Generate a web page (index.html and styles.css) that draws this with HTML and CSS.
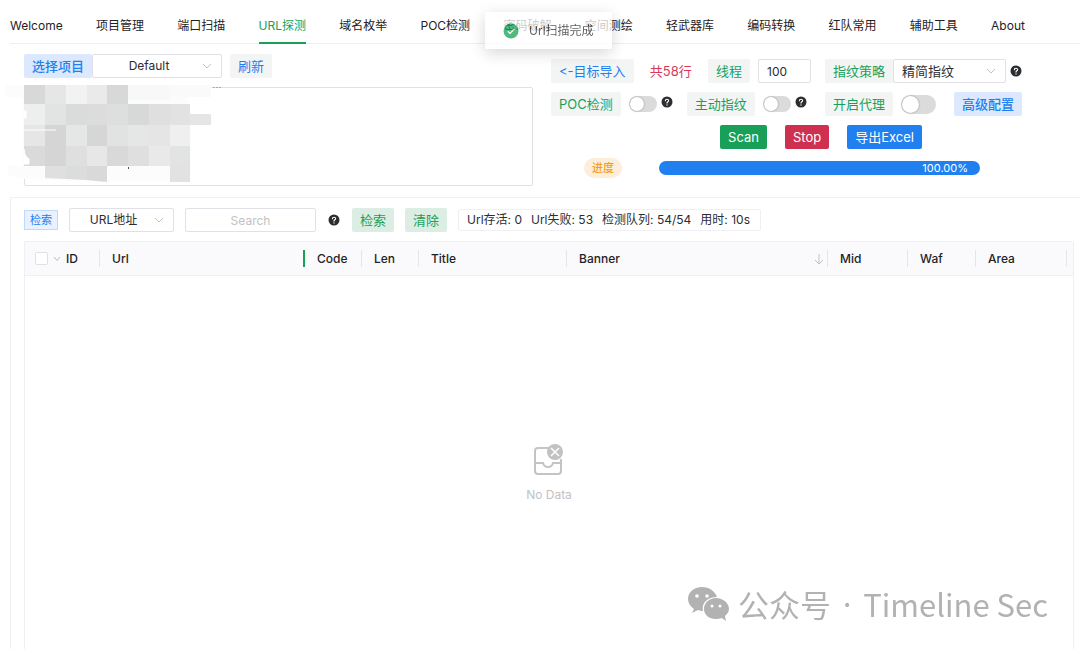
FILE: index.html
```html
<!DOCTYPE html>
<html lang="zh-CN">
<head>
  <meta charset="UTF-8">
  <meta name="viewport" content="width=device-width, initial-scale=1.0">
  <title>URL探测</title>
  <link rel="stylesheet" href="styles.css">
</head>
<body>
  <svg class="sprite" aria-hidden="true">
    <symbol id="icon-help" viewBox="0 0 12 12">
      <circle cx="6" cy="6" r="5.5" fill="#2b2d30"/>
      <path d="M4.4 4.8C4.4 2.7 7.7 2.8 7.6 4.7C7.6 5.8 6 5.8 6 7.1" fill="none" stroke="#fff" stroke-width="1.1" stroke-linecap="round"/>
      <circle cx="6" cy="8.9" r=".7" fill="#fff"/>
    </symbol>
  </svg>

  <div class="app">
    <nav class="tabs">
      <a href="#">Welcome</a>
      <a href="#">项目管理</a>
      <a href="#">端口扫描</a>
      <a href="#" class="active">URL探测</a>
      <a href="#">域名枚举</a>
      <a href="#">POC检测</a>
      <a href="#">密码破解</a>
      <a href="#">空间测绘</a>
      <a href="#">轻武器库</a>
      <a href="#">编码转换</a>
      <a href="#">红队常用</a>
      <a href="#">辅助工具</a>
      <a href="#">About</a>
    </nav>

    <section class="panel">
      <div class="targets">
        <div class="project">
          <label class="label label-blue" for="project">选择项目</label>
          <select class="select select-project" id="project"><option>Default</option></select>
          <button class="btn btn-light text-blue">刷新</button>
        </div>
        <div class="target-box">
          <textarea aria-label="目标"></textarea>
          <svg class="mosaic" width="220" height="100" viewBox="0 0 220 100" aria-hidden="true">
            <path d="M2 1H207V13H184V28H187V98H104L20 95L4 91V82H19V14L2 13Z" fill="#fcfcfc"/>
            <g shape-rendering="crispEdges">
              <path d="M20 1h21v19H20z" fill="#d8d8d8"/>
              <path d="M41 1h21v19H41z" fill="#e6e6e6"/>
              <path d="M62 1h21v19H62z" fill="#f2f2f2"/>
              <path d="M83 1h20v19H83z" fill="#eaeaea"/>
              <path d="M103 1h21v19h-21z" fill="#d8d8d8"/>
              <path d="M124 1h42v15h-42z" fill="#f8f8f8"/>
              <path d="M166 1h41v12h-41z" fill="#fafafa"/>
              <path d="M20 20h21v21H20z" fill="#ecefee"/>
              <path d="M41 20h21v21H41z" fill="#e1e4e3"/>
              <path d="M62 20h21v21H62z" fill="#d9dcdb"/>
              <path d="M83 20h20v21H83z" fill="#dcdcdc"/>
              <path d="M103 20h21v21h-21z" fill="#dddfde"/>
              <path d="M124 20h21v21h-21z" fill="#d6d9d8"/>
              <path d="M145 20h21v21h-21z" fill="#dfdfdf"/>
              <path d="M166 20h20v21h-20z" fill="#e2e2e2"/>
              <path d="M186 30h21v11h-21z" fill="#e5e5e5"/>
              <path d="M20 41h21v21H20z" fill="#e6e6e6"/>
              <path d="M41 41h21v21H41z" fill="#d5d5d5"/>
              <path d="M62 41h21v21H62z" fill="#e4e7e6"/>
              <path d="M83 41h20v21H83z" fill="#d6d6d6"/>
              <path d="M103 41h21v21h-21z" fill="#e0e3e2"/>
              <path d="M124 41h21v21h-21z" fill="#e4e7e6"/>
              <path d="M145 41h21v21h-21z" fill="#e5e5e5"/>
              <path d="M166 41h20v21h-20z" fill="#efefef"/>
              <path d="M20 62h21v20H20z" fill="#dadada"/>
              <path d="M41 62h21v20H41z" fill="#d5d5d5"/>
              <path d="M62 62h21v20H62z" fill="#dfdfdf"/>
              <path d="M83 62h20v20H83z" fill="#e7e7e7"/>
              <path d="M103 62h21v20h-21z" fill="#d9d9d9"/>
              <path d="M124 62h21v20h-21z" fill="#dfdfdf"/>
              <path d="M145 62h21v20h-21z" fill="#e9e9e9"/>
              <path d="M166 62h20v20h-20z" fill="#e1e4e3"/>
              <path d="M166 82h20v16h-20z" fill="#e2e2e2"/>
            </g>
            <path d="M41 82H62V95L41 94Z" fill="#dfdfdf"/>
            <path d="M62 82H83V96L62 95Z" fill="#dadddc"/>
            <path d="M83 82H103V98L92 97L83 96Z" fill="#d9d9d9"/>
            <path d="M20 46H52M20 27h2v7h-2zM20 65q0 7 5 10v5h-5z" fill="#fff" stroke="#fff"/>
            <path d="M209 3.500h8" stroke="#aaa" stroke-dasharray="2 1"/>
            <path d="M124 83h1v2h-1z" fill="#555"/>
          </svg>
        </div>
      </div>

      <div class="settings">
        <div class="setting-row">
          <div class="setting-main">
            <button class="btn btn-light text-blue">&lt;-目标导入</button>
            <span class="text-red">共58行</span>
            <div class="pair">
              <label class="label label-light" for="threads">线程</label>
              <input class="input input-threads" id="threads" type="text" value="100">
            </div>
          </div>
          <div class="joined">
            <label class="label label-light" for="strategy">指纹策略</label>
            <select class="select select-strategy" id="strategy"><option>精简指纹</option></select>
            <svg class="help"><use href="#icon-help"/></svg>
          </div>
        </div>
        <div class="setting-row">
          <div class="setting-main setting-switches">
            <div class="pair">
              <label class="label label-light" for="poc">POC检测</label>
              <input class="switch" id="poc" type="checkbox">
              <svg class="help help-top"><use href="#icon-help"/></svg>
            </div>
            <div class="pair">
              <label class="label label-light" for="active-scan">主动指纹</label>
              <input class="switch" id="active-scan" type="checkbox">
              <svg class="help help-top"><use href="#icon-help"/></svg>
            </div>
          </div>
          <div class="pair">
            <label class="label label-light" for="proxy">开启代理</label>
            <input class="switch switch-large" id="proxy" type="checkbox">
            <button class="btn btn-blue-light">高级配置</button>
          </div>
        </div>
        <div class="actions">
          <button class="btn btn-green">Scan</button>
          <button class="btn btn-red">Stop</button>
          <button class="btn btn-blue">导出Excel</button>
        </div>
        <div class="progress-row">
          <span class="progress-tag">进度</span>
          <div class="progress" role="progressbar" aria-label="进度" aria-valuenow="100">100.00%</div>
        </div>
      </div>
    </section>

    <section class="results">
      <div class="toolbar">
        <label class="tag" for="field">检索</label>
        <select class="select select-field" id="field"><option>URL地址</option></select>
        <input class="input input-search" type="text" placeholder="Search" aria-label="Search">
        <svg class="help help-search"><use href="#icon-help"/></svg>
        <button class="btn btn-green-light">检索</button>
        <button class="btn btn-green-light">清除</button>
        <div class="stats">
          <span>Url存活: 0</span>
          <span>Url失败: 53</span>
          <span>检测队列: 54/54</span>
          <span>用时: 10s</span>
        </div>
      </div>

      <div class="table-box">
        <table>
          <colgroup>
            <col class="col-id">
            <col class="col-url">
            <col class="col-code">
            <col class="col-code">
            <col class="col-title">
            <col>
            <col class="col-mid">
            <col class="col-waf">
            <col class="col-area">
          </colgroup>
          <thead>
            <tr>
              <th>
                <div class="th-id">
                  <input class="checkbox" type="checkbox" aria-label="全选">
                  <svg width="8" height="6" viewBox="0 0 8 6"><path d="M1 1L4 4.500L7 1" fill="none" stroke="#bbb"/></svg>
                  <span>ID</span>
                </div>
              </th>
              <th class="resizing"><div>Url</div></th>
              <th><div>Code</div></th>
              <th><div>Len</div></th>
              <th><div>Title</div></th>
              <th>
                <div class="th-sort">Banner
                  <svg width="10" height="12" viewBox="0 0 10 12"><path d="M5 1V11M1 7L5 11L9 7" fill="none" stroke="#c2c2c2"/></svg>
                </div>
              </th>
              <th><div>Mid</div></th>
              <th><div>Waf</div></th>
              <th><div>Area</div></th>
            </tr>
          </thead>
        </table>
        <div class="empty">
          <svg width="32" height="34" viewBox="0 0 32 34">
            <path d="M18 5H5Q2 5 2 8V28Q2 31 5 31H25Q28 31 28 28V16M2 20H10Q11 24 15 24Q19 24 20 20H28" fill="none" stroke="#c4c4c4" stroke-width="2"/>
            <circle cx="22" cy="9" r="8" fill="#c2c2c2"/>
            <path d="M18 5L26 13M26 5L18 13" stroke="#fff" stroke-width="1.500"/>
          </svg>
          <span>No Data</span>
        </div>
      </div>
    </section>
  </div>

  <div class="toast" role="status">
    <svg width="16" height="16" viewBox="0 0 16 16">
      <circle cx="8" cy="8" r="7.500" fill="#18a058"/>
      <path d="M4.800 8.200L7 10.400L11.300 6" fill="none" stroke="#fff" stroke-width="1.300"/>
    </svg>
    <span>Url扫描完成</span>
  </div>

  <div class="watermark">
    <svg width="42" height="36" viewBox="0 0 42 36">
      <path d="M15 1C7 1 1 6 1 13C1 17 3 20 7 23L5 27L11 24Q13 25 16 25C14 17 21 11 30 11C28 5 22 1 15 1Z" fill="#b2b2b2"/>
      <path d="M29 12C22 12 17 17 17 23C17 29 22 33 29 33Q32 33 35 32L39 35L38 30C40 28 42 26 42 23C42 17 36 12 29 12Z" fill="#b2b2b2"/>
      <g fill="#fff">
        <circle cx="10" cy="10" r="1.800"/>
        <circle cx="20" cy="10" r="1.800"/>
        <circle cx="25" cy="20" r="1.500"/>
        <circle cx="33" cy="20" r="1.500"/>
      </g>
    </svg>
    <span>公众号</span>
    <span class="dot">·</span>
    <span>Timeline Sec</span>
  </div>
</body>
</html>
```
FILE: styles.css
```css
* {
  box-sizing: border-box;
}

body {
  margin: 0;
  background: #fff;
  color: #2b2d30;
  font-family: Inter, "Noto Sans CJK SC", sans-serif;
  font-size: 12px;
  font-variant-ligatures: none;
  line-height: 20px;
}

button,
input,
select,
textarea {
  margin: 0;
  font: inherit;
  font-variant-ligatures: none;
  color: inherit;
}

.sprite {
  position: absolute;
  width: 0;
  height: 0;
}

.app {
  display: flex;
  flex-direction: column;
  min-height: 100vh;
  padding-left: 10px;
}

/* tabs */
.tabs {
  display: flex;
  justify-content: space-between;
  height: 44px;
  padding-right: 55px;
  border-bottom: 1px solid #efeff2;
}

.tabs a {
  height: 44px;
  padding-top: 16px;
  color: #1f2225;
  text-decoration: none;
  white-space: nowrap;
}

.tabs .active {
  color: #18a058;
  border-bottom: 2px solid #18a058;
}

/* top panel */
.panel {
  display: grid;
  grid-template-columns: 1fr 1fr;
  gap: 18px;
  padding: 10px 20px 11px 14px;
}

.project,
.pair,
.joined,
.setting-row,
.setting-main,
.toolbar {
  display: flex;
  align-items: center;
}

.label,
.btn {
  height: 24px;
  padding: 0 8px;
  border: 0;
  border-radius: 2px;
  line-height: 24px;
  white-space: nowrap;
  font-size: 13px;
}

.btn {
  cursor: pointer;
}

.label-blue,
.btn-blue-light {
  background: #dbe8fd;
  color: #2080f0;
  font-weight: 500;
}

.label-light,
.btn-light {
  background: #f3f5f5;
  color: #18a058;
}

.text-blue {
  color: #2080f0;
}

.text-red {
  color: #d9385a;
  font-size: 13px;
}

.btn-green {
  background: #18a058;
  color: #fff;
}

.btn-red {
  background: #d03050;
  color: #fff;
}

.btn-blue {
  background: #2080f0;
  color: #fff;
}

.btn-green-light {
  background: #dceee4;
  color: #18a058;
}

.select,
.input {
  height: 24px;
  border: 1px solid #e0e0e6;
  border-radius: 2px;
  background-color: #fff;
}

.select {
  appearance: none;
  padding: 0 24px 0 8px;
  background-image: url("data:image/svg+xml,%3Csvg xmlns='http://www.w3.org/2000/svg' width='10' height='6'%3E%3Cpath d='M1 1L5 5L9 1' fill='none' stroke='%23c2c2c2'/%3E%3C/svg%3E");
  background-repeat: no-repeat;
  background-position: right 9px center;
  text-align-last: center;
}

.select-project {
  width: 130px;
  margin-right: 8px;
}

.select-strategy {
  width: 113px;
  text-align-last: left;
  font-size: 13px;
}

.select-field {
  width: 105px;
}

.input-threads {
  width: 53px;
  padding: 0 8px;
}

.input-search {
  width: 131px;
  text-align: center;
}

.input-search::placeholder {
  color: #c2c2c2;
}

.target-box {
  position: relative;
  margin-top: 9px;
}

.target-box textarea {
  display: block;
  width: 100%;
  height: 99px;
  border: 1px solid #e0e0e6;
  border-radius: 2px;
  resize: none;
}

.mosaic {
  position: absolute;
  top: -3px;
  left: -20px;
}

.settings {
  padding-top: 5px;
}

.setting-row {
  gap: 14px;
  margin-bottom: 9px;
}

.setting-main {
  flex: 0 0 260px;
  justify-content: space-between;
}

.setting-switches {
  justify-content: flex-start;
  gap: 14px;
}

.pair {
  gap: 8px;
}

.help {
  flex: none;
  width: 12px;
  height: 12px;
}

.joined .help {
  margin-left: 4px;
}

.help-top {
  align-self: flex-start;
  margin-top: 4px;
  margin-left: -4px;
}

.help-search {
  margin: 0 1px;
}

.switch {
  appearance: none;
  flex: none;
  width: 28px;
  height: 16px;
  padding: 1px;
  border-radius: 8px;
  background: #dbdbdb;
}

.switch::before {
  content: "";
  display: block;
  width: 14px;
  height: 14px;
  border-radius: 50%;
  background: #fff;
  box-shadow: 0 0 2px rgba(0, 0, 0, 0.4);
}

.switch-large {
  width: 35px;
  height: 19px;
  border-radius: 10px;
  margin-right: 10px;
}

.switch-large::before {
  width: 17px;
  height: 17px;
}

.actions {
  display: flex;
  justify-content: center;
  gap: 18px;
  padding-left: 31px;
}

.progress-row {
  display: flex;
  align-items: center;
  gap: 37px;
  margin-top: 9px;
  padding: 0 80px 0 33px;
}

.progress-tag {
  padding: 0 8px;
  border-radius: 10px;
  background: #fdeedb;
  color: #f0a020;
  font-size: 11px;
  font-weight: 500;
  line-height: 20px;
}

.progress {
  flex: 1;
  padding-right: 12px;
  border-radius: 7px;
  background: #2080f0;
  color: #fff;
  font-size: 11px;
  line-height: 14px;
  text-align: right;
}

/* results */
.results {
  flex: 1;
  display: flex;
  flex-direction: column;
  padding: 10px 6px 0 13px;
  border-top: 1px solid #efeff5;
  border-left: 1px solid #efeff5;
}

.toolbar {
  gap: 11px;
  margin-bottom: 9px;
}

.tag {
  padding: 0 5px;
  border: 1px solid #bfd9fb;
  background: #e8f1fd;
  color: #2080f0;
  font-size: 11px;
  line-height: 18px;
}

.stats {
  display: flex;
  gap: 9px;
  width: 303px;
  padding: 0 8px;
  border: 1px solid #efeff5;
  border-radius: 2px;
  white-space: nowrap;
}

.table-box {
  flex: 1;
  border: 1px solid #efeff5;
  border-bottom: 0;
  border-radius: 2px 2px 0 0;
}

table {
  width: 100%;
  table-layout: fixed;
  border-collapse: collapse;
}

th {
  padding: 8px 6px 8px 0;
  border-bottom: 1px solid #efeff5;
  background: #fafafc;
  color: #1f2225;
  font-weight: 500;
  text-align: left;
}

th:not(:last-child) {
  padding-right: 0;
}

th div {
  height: 17px;
  padding-left: 12px;
  border-right: 1px solid #e6e6ea;
  line-height: 17px;
}

th.resizing div {
  border-right: 2px solid #18a058;
}

.col-id { width: 75px; }
.col-url { width: 205px; }
.col-code { width: 57px; }
.col-title { width: 148px; }
.col-mid { width: 80px; }
.col-waf { width: 68px; }
.col-area { width: 97px; }

th .th-id,
th .th-sort {
  display: flex;
  align-items: center;
}

th .th-id {
  gap: 5px;
  padding-left: 10px;
}

th .th-sort {
  justify-content: space-between;
  padding-right: 3px;
}

.checkbox {
  appearance: none;
  width: 13px;
  height: 13px;
  border: 1px solid #e0e0e6;
  border-radius: 2px;
  background: #fff;
}

.empty {
  display: flex;
  flex-direction: column;
  align-items: center;
  gap: 8px;
  padding-top: 167px;
  color: #c2c2c2;
}

/* overlays */
.toast {
  position: fixed;
  top: 12px;
  left: 485px;
  display: flex;
  align-items: center;
  gap: 10px;
  height: 37px;
  padding: 0 18px;
  border-radius: 2px;
  background: #fff;
  box-shadow: 0 4px 16px rgba(0, 0, 0, 0.22);
  opacity: 0.75;
  white-space: nowrap;
}

.watermark {
  position: fixed;
  right: 32px;
  bottom: 23px;
  display: flex;
  align-items: center;
  gap: 9px;
  color: #b2b2b2;
  font-family: "Noto Sans CJK SC", sans-serif;
  font-size: 31px;
  line-height: 44px;
}

.dot {
  padding: 0 3px;
  font-family: "Noto Sans", sans-serif;
}
```
